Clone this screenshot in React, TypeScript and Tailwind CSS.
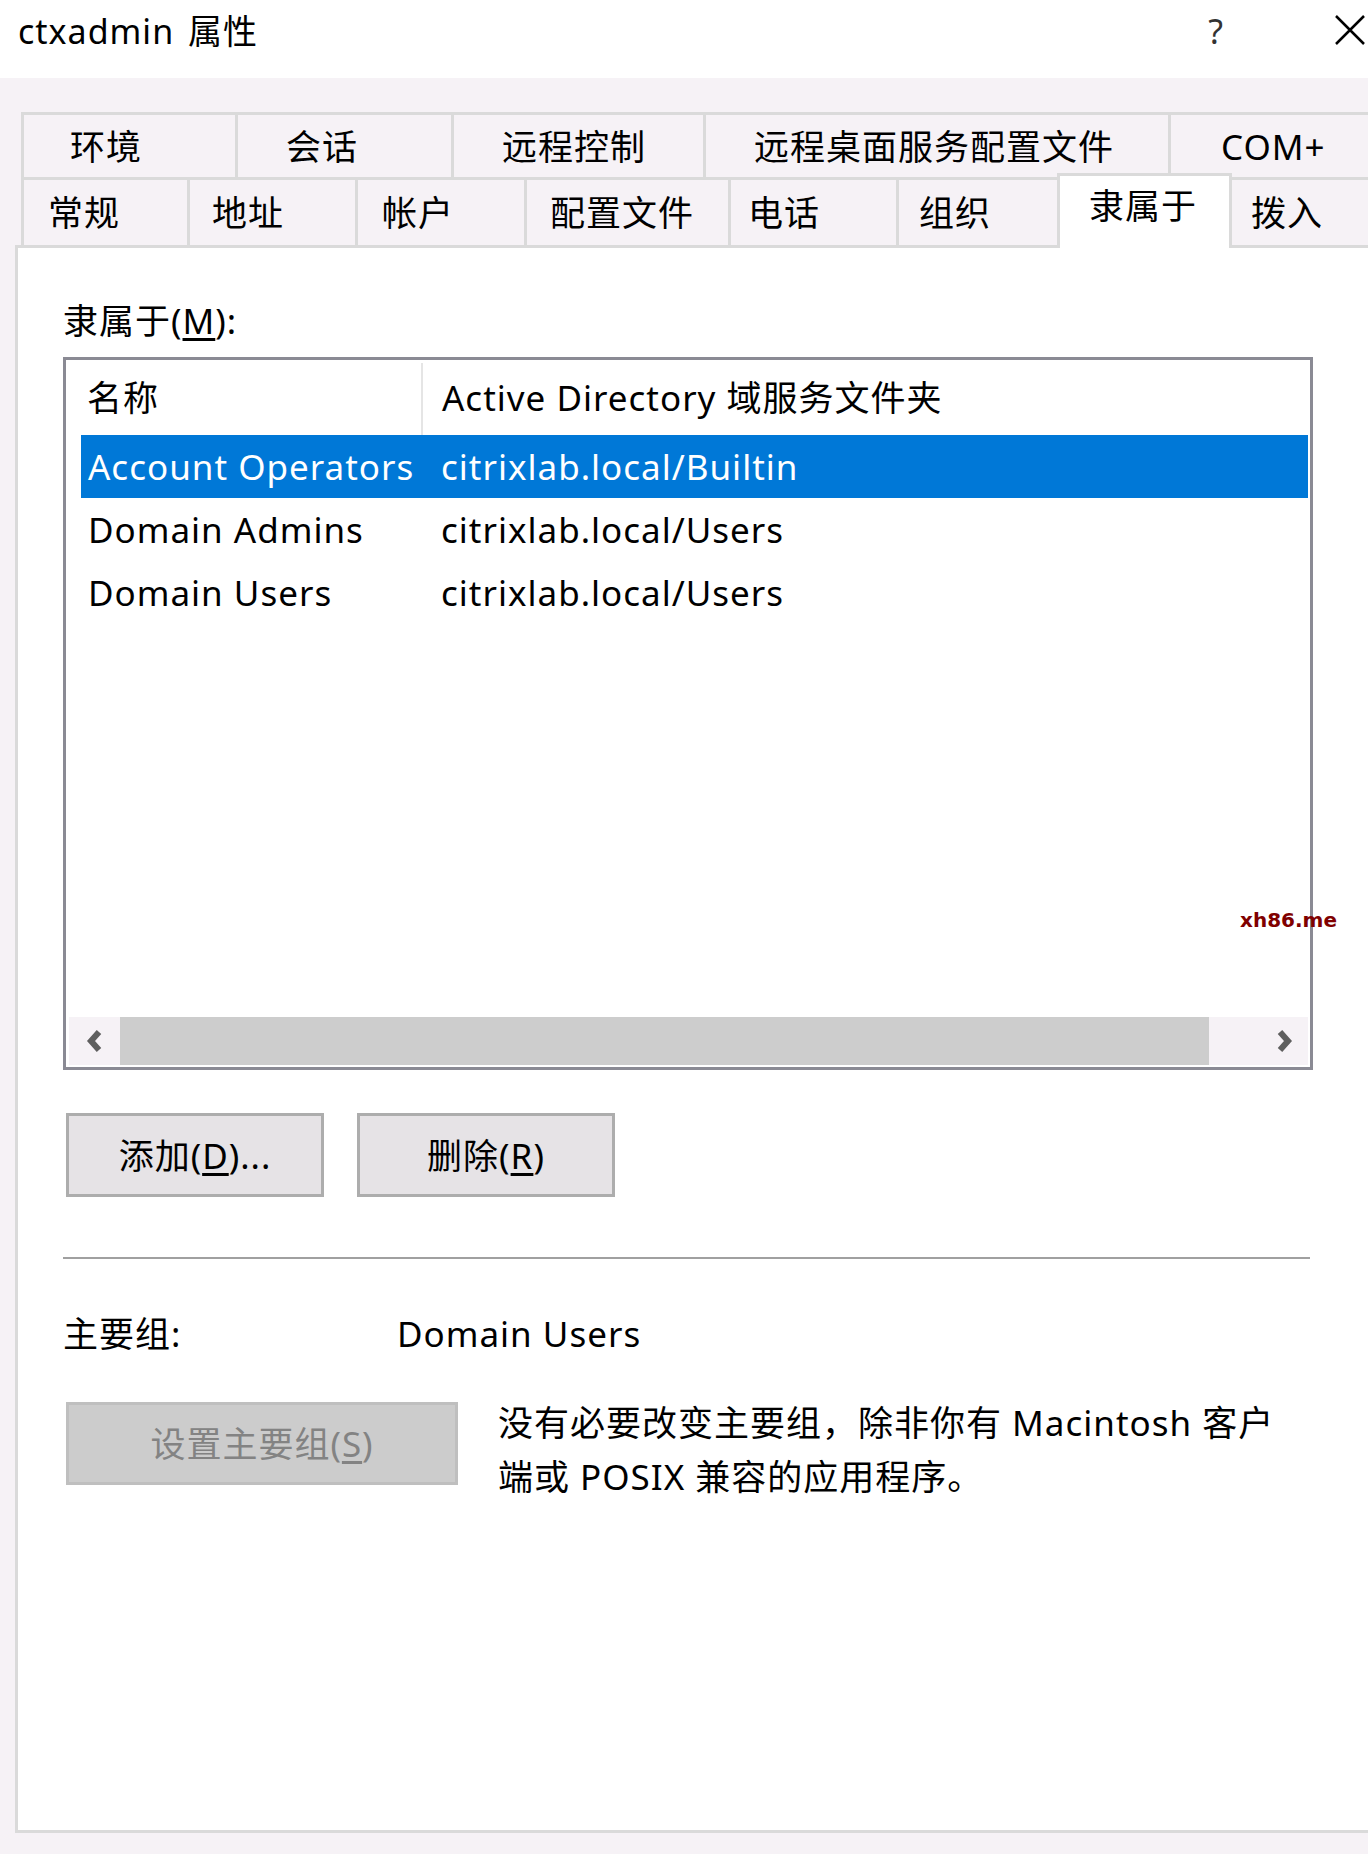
import React from "react";

function ChevronLeft() {
  return (
    <svg width="20" height="24" viewBox="0 0 20 24">
      <path d="M14 3 L6 12 L14 21" fill="none" stroke="#5f5f5f" strokeWidth="6" />
    </svg>
  );
}

function ChevronRight() {
  return (
    <svg width="20" height="24" viewBox="0 0 20 24">
      <path d="M6 3 L14 12 L6 21" fill="none" stroke="#5f5f5f" strokeWidth="6" />
    </svg>
  );
}

export default function App() {
  return (
    <div className="relative w-[1368px] h-[1854px] overflow-hidden bg-[#f6f2f6] text-black text-[35px] leading-[35px] tracking-[1px] font-['Noto_Sans','Noto_Sans_CJK_SC',sans-serif]">
      {/* Title bar */}
      <div className="flex items-start h-[78px] bg-white">
        <div className="pl-[18px] pt-[14px] text-[34px] leading-[34px]">
          ctxadmin<span className="ml-[4px]"> 属性</span>
        </div>
        <div className="ml-auto flex items-start pt-[14px] pr-[3px]">
          <span className="text-[34px] leading-[34px] text-[#333]">?</span>
          <svg className="ml-[111px] mt-[1px]" width="30" height="30" viewBox="0 0 30 30">
            <path d="M1 1 L29 29 M29 1 L1 29" stroke="#000" strokeWidth="2.5" fill="none" />
          </svg>
        </div>
      </div>

      {/* Tabs */}
      <div className="pt-[34px]">
        <div className="flex h-[65px] ml-[21px]">
          <div className="w-[214px] shrink-0 border-t-[3px] border-l-[3px] border-[#dadada] flex items-center pl-[46px]">环境</div>
          <div className="w-[216px] shrink-0 border-t-[3px] border-l-[3px] border-[#dadada] flex items-center pl-[48px]">会话</div>
          <div className="w-[252px] shrink-0 border-t-[3px] border-l-[3px] border-[#dadada] flex items-center pl-[48px]">远程控制</div>
          <div className="w-[465px] shrink-0 border-t-[3px] border-l-[3px] border-[#dadada] flex items-center pl-[48px]">远程桌面服务配置文件</div>
          <div className="w-[260px] shrink-0 border-t-[3px] border-l-[3px] border-[#dadada] flex items-center pl-[50px]">COM+</div>
        </div>
        <div className="flex items-end h-[68px] ml-[21px]">
          <div className="h-full w-[166px] shrink-0 border-t-[3px] border-l-[3px] border-[#dadada] flex items-center pl-[24px]">常规</div>
          <div className="h-full w-[168px] shrink-0 border-t-[3px] border-l-[3px] border-[#dadada] flex items-center pl-[22px]">地址</div>
          <div className="h-full w-[169px] shrink-0 border-t-[3px] border-l-[3px] border-[#dadada] flex items-center pl-[24px]">帐户</div>
          <div className="h-full w-[204px] shrink-0 border-t-[3px] border-l-[3px] border-[#dadada] flex items-center pl-[23px]">配置文件</div>
          <div className="h-full w-[168px] shrink-0 border-t-[3px] border-l-[3px] border-[#dadada] flex items-center pl-[17px]">电话</div>
          <div className="h-full w-[161px] shrink-0 border-t-[3px] border-l-[3px] border-[#dadada] flex items-center pl-[20px]">组织</div>
          <div className="relative z-10 h-[75px] -mb-[3px] w-[175px] shrink-0 border-t-[3px] border-l-[3px] border-r-[3px] border-[#dadada] bg-white flex items-center pl-[29px] pb-[14px]">隶属于</div>
          <div className="h-full w-[200px] shrink-0 border-t-[3px] border-[#dadada] flex items-center pl-[19px]">拨入</div>
        </div>
      </div>

      {/* Panel */}
      <div className="ml-[15px] w-[1420px] h-[1588px] border-[3px] border-[#dadada] bg-white">
        <div className="pl-[45px] w-[1295px] flex flex-col">
          <div className="mt-[55px] h-[35px]">
            隶属于(<span className="underline underline-offset-[4px]">M</span>):
          </div>

          {/* List box */}
          <div className="mt-[19px] h-[713px] w-[1250px] border-[3px] border-[#8a8a94] bg-white flex flex-col">
            <div className="flex h-[75px] shrink-0">
              <div className="w-[355px] shrink-0 flex items-center pl-[21px]">名称</div>
              <div className="mt-[3px] w-[2px] h-[72px] bg-[#e5e5e5]" />
              <div className="flex items-center pl-[19px]">Active Directory 域服务文件夹</div>
            </div>
            <div className="ml-[15px] mr-[2px] flex flex-col">
              <div className="flex items-center h-[63px] bg-[#0078d7] text-white">
                <div className="w-[360px] shrink-0 pl-[7px]">Account Operators</div>
                <div>citrixlab.local/Builtin</div>
              </div>
              <div className="flex items-center h-[63px]">
                <div className="w-[360px] shrink-0 pl-[7px]">Domain Admins</div>
                <div>citrixlab.local/Users</div>
              </div>
              <div className="flex items-center h-[63px]">
                <div className="w-[360px] shrink-0 pl-[7px]">Domain Users</div>
                <div>citrixlab.local/Users</div>
              </div>
            </div>
            <div className="flex-1" />
            <div className="pl-[3px] pr-[2px] pb-[2px]">
              <div className="flex h-[48px] bg-[#f6f2f6]">
                <div className="w-[51px] shrink-0 flex items-center justify-center">
                  <ChevronLeft />
                </div>
                <div className="w-[1089px] shrink-0 bg-[#cdcdcd]" />
                <div className="flex-1 flex items-center justify-end pr-[14px]">
                  <ChevronRight />
                </div>
              </div>
            </div>
          </div>

          {/* Add / Remove buttons */}
          <div className="mt-[43px] ml-[3px] flex gap-[33px]">
            <div className="w-[258px] h-[84px] border-[3px] border-[#adadad] bg-[#e6e3e6] flex items-center justify-center">
              添加(<span className="underline underline-offset-[4px]">D</span>)...
            </div>
            <div className="w-[258px] h-[84px] border-[3px] border-[#adadad] bg-[#e6e3e6] flex items-center justify-center">
              删除(<span className="underline underline-offset-[4px]">R</span>)
            </div>
          </div>

          {/* Separator */}
          <div className="mt-[60px] h-[2px] w-[1247px] bg-[#a0a0a0]" />

          {/* Primary group */}
          <div className="mt-[57px] h-[35px] flex">
            <div className="w-[334px] shrink-0">主要组:</div>
            <div>Domain Users</div>
          </div>

          <div className="mt-[51px] ml-[3px] flex items-start">
            <div className="w-[392px] h-[83px] shrink-0 border-[3px] border-[#bfbfbf] bg-[#cccccc] text-[#838383] flex items-center justify-center">
              设置主要组(<span className="underline underline-offset-[4px]">S</span>)
            </div>
            <div className="-mt-[6px] ml-[40px] leading-[54px]">
              没有必要改变主要组，除非你有 Macintosh 客户
              <br />
              端或 POSIX 兼容的应用程序。
            </div>
          </div>
        </div>
      </div>

      {/* Watermark */}
      <div className="absolute left-[1240px] top-[908px] text-[20px] leading-[24px] tracking-normal font-bold text-[#800000] font-['DejaVu_Sans',sans-serif]">
        xh86.me
      </div>
    </div>
  );
}
